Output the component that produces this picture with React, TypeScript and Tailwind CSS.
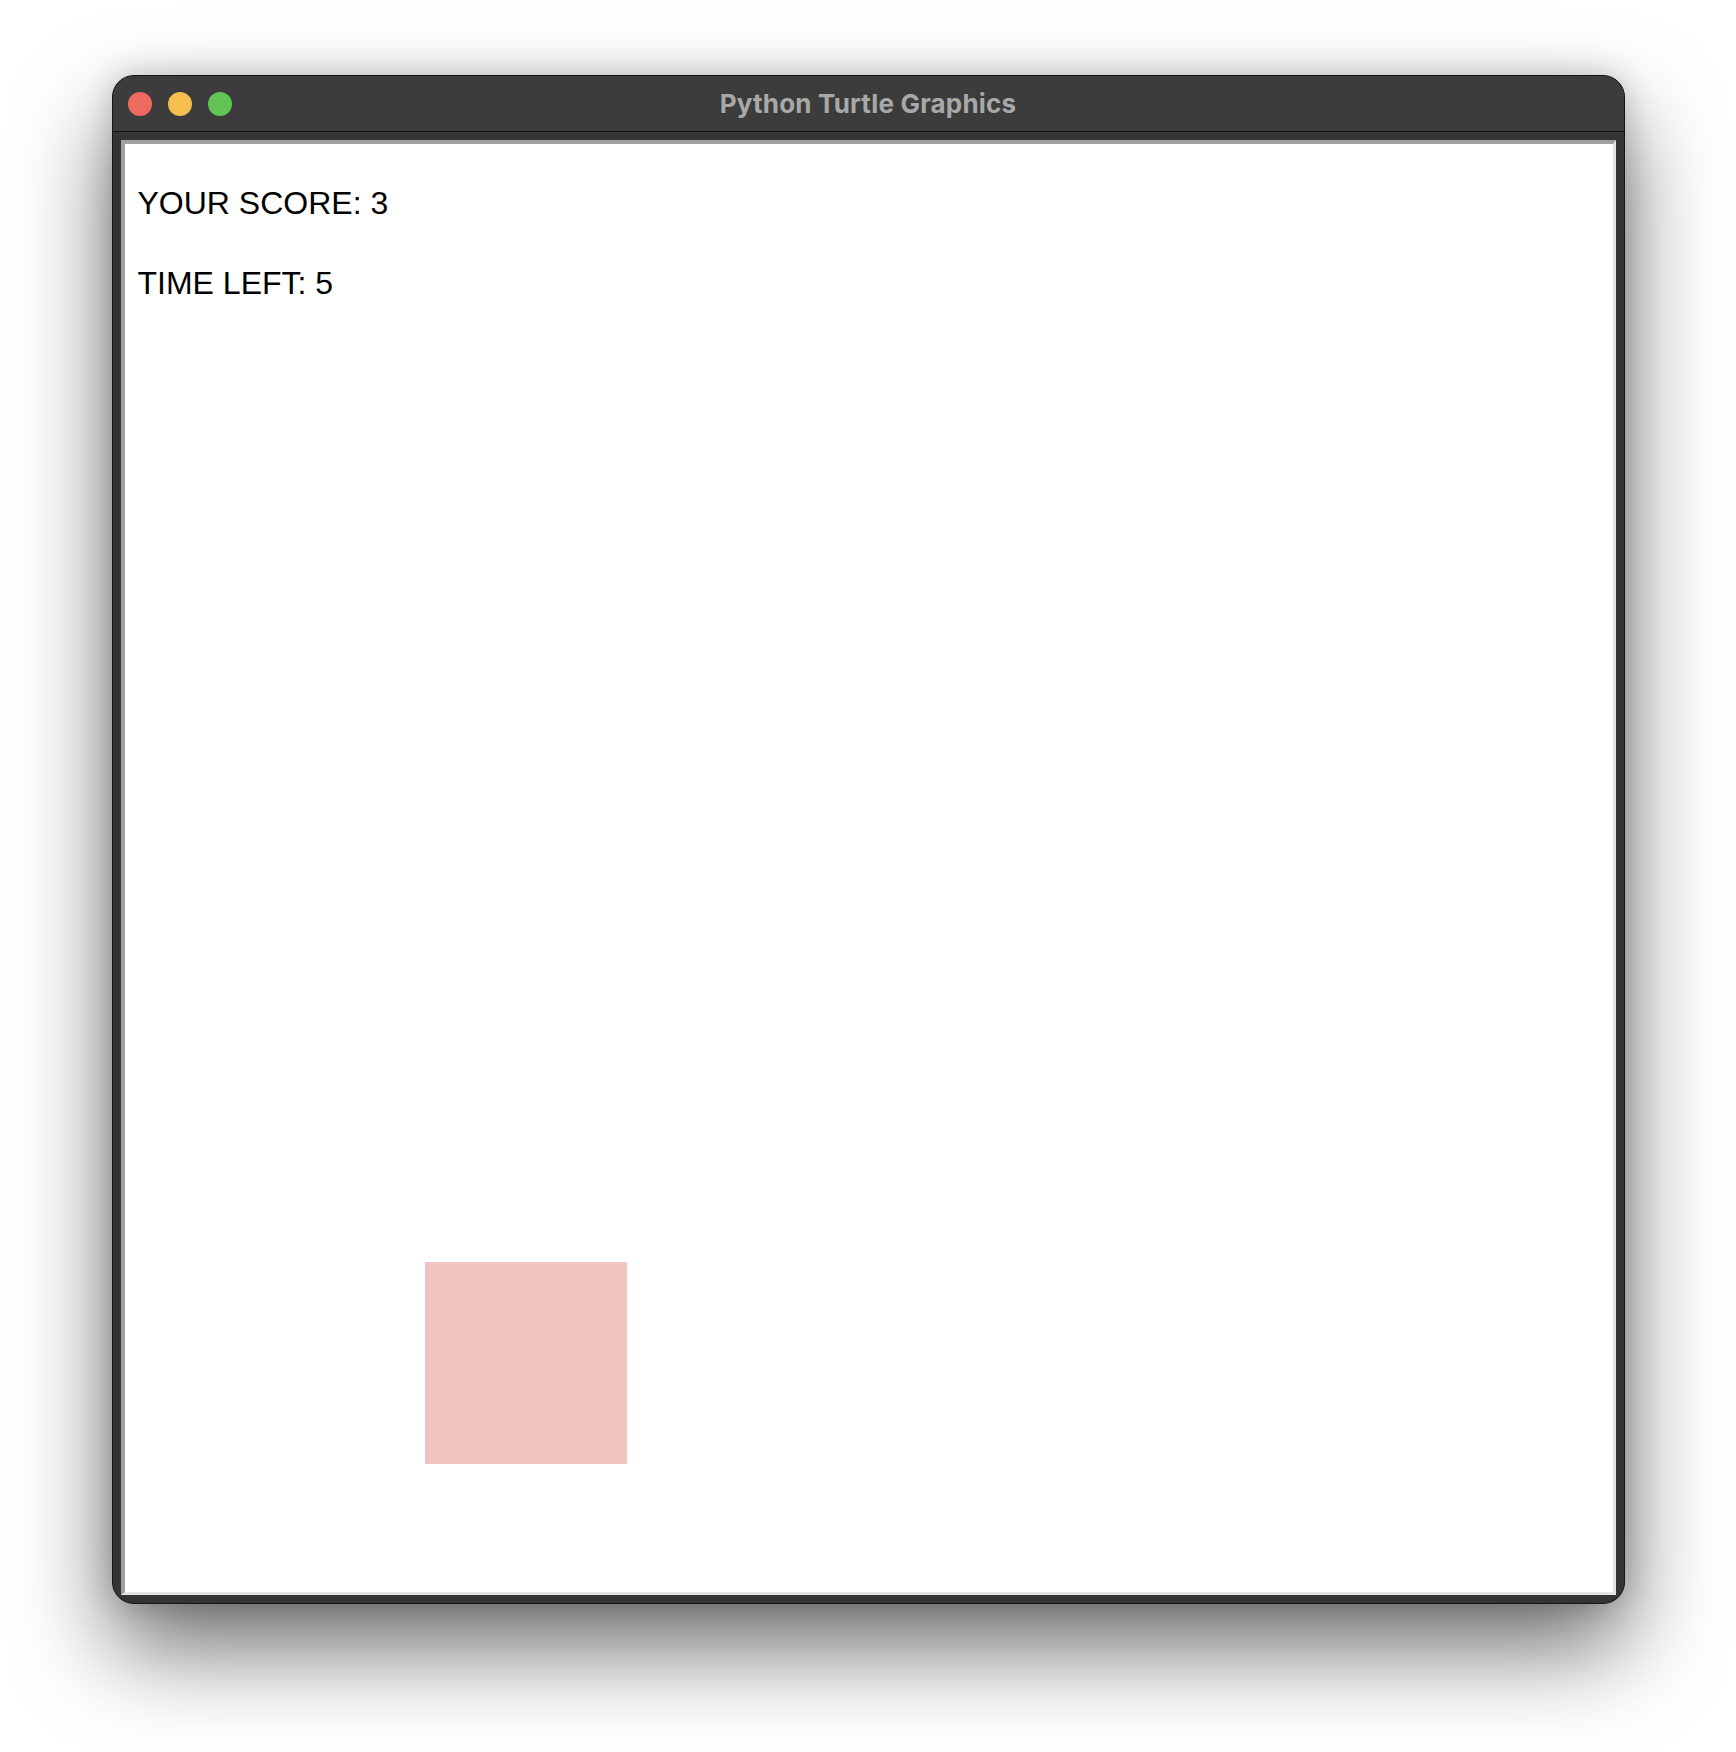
import React from "react";

export default function App() {
  return (
    <div className="w-[1736px] h-[1752px] bg-white pt-[75px] overflow-hidden">
      <div className="mx-auto w-[1513px] h-[1529px] rounded-[22px] border border-[#141414] bg-[#343434] shadow-[0_44px_95px_rgba(0,0,0,0.58),0_0_30px_rgba(0,0,0,0.18)] flex flex-col overflow-hidden">
        {/* Title bar */}
        <div className="h-[56px] shrink-0 bg-[#3b3c3b] border-b border-[#121212] grid grid-cols-[1fr_auto_1fr] items-center">
          <div className="flex items-center gap-[16px] pl-[15px]">
            <span className="w-[24px] h-[24px] rounded-full bg-[#ee6a5f]" />
            <span className="w-[24px] h-[24px] rounded-full bg-[#f5bf4f]" />
            <span className="w-[24px] h-[24px] rounded-full bg-[#61c454]" />
          </div>
          <div className="text-[26px] leading-none font-bold text-[#a8a8a8] font-['Inter','Noto_Sans',sans-serif] tracking-[0.2px]">
            Python Turtle Graphics
          </div>
          <div />
        </div>
        {/* Body */}
        <div className="flex-1 pt-[8px] pl-[8px] pr-[8px] pb-[8px] flex">
          <div className="flex-1 border-l-[4px] border-t-[4px] border-r-[3px] border-b-[3px] border-l-[#a0a0a0] border-t-[#a0a0a0] border-r-[#e4e4e4] border-b-[#e4e4e4] bg-white relative">
            <div className="pl-[13px] pt-[43px] flex flex-col gap-[48px] font-['Liberation_Sans',Arial,sans-serif] text-[32px] leading-[32px] text-black">
              <div>YOUR SCORE: 3</div>
              <div>TIME LEFT: 5</div>
            </div>
            <div className="absolute left-[300px] top-[1118px] w-[202px] h-[202px] bg-[#f0c4c0]" />
          </div>
        </div>
      </div>
    </div>
  );
}
